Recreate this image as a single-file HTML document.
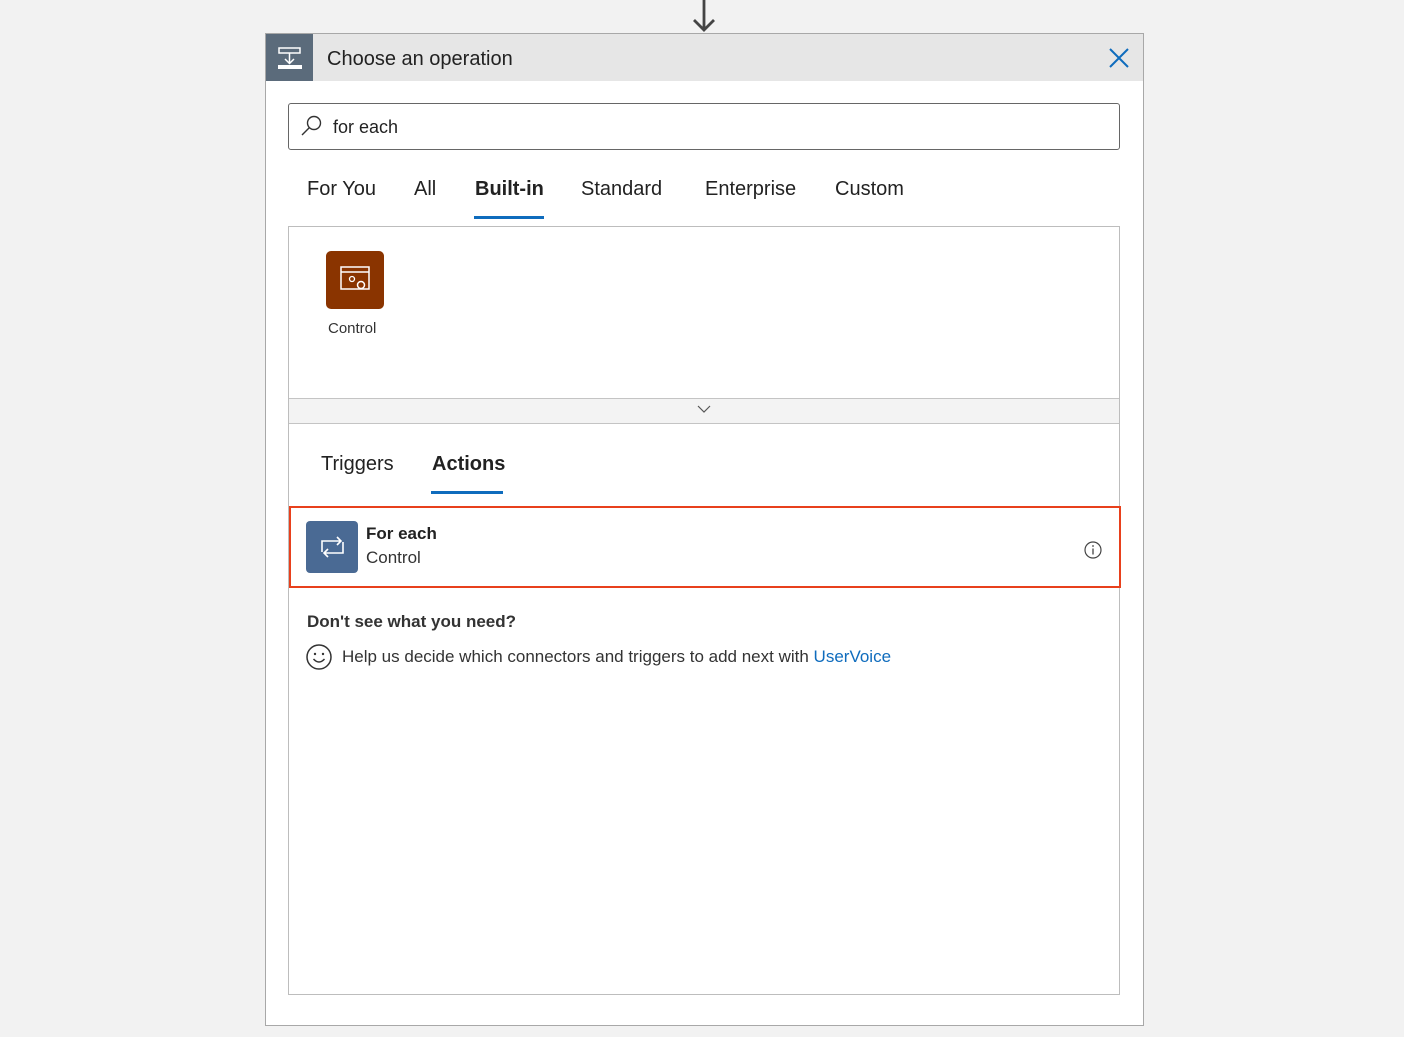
<!DOCTYPE html>
<html><head><style>
body{margin:0;width:1404px;height:1037px;background:#f2f2f2;font-family:"Liberation Sans",sans-serif;position:relative;overflow:hidden;color:#222}
.a{position:absolute}
</style></head><body>
<svg class="a" style="left:690px;top:0" width="28" height="34"><path d="M14 0V30M4 20L14 30L24 20" stroke="#444" stroke-width="2.8" fill="none"/></svg>
<div class="a" style="left:265px;top:33px;width:877px;height:991px;border:1px solid #a8a8a8;background:#fff"></div>
<div class="a" style="left:266px;top:34px;width:877px;height:47px;background:#e6e6e6"></div>
<div class="a" style="left:266px;top:34px;width:47px;height:47px;background:#5b6b7b"></div>
<svg class="a" style="left:276px;top:44px" width="28" height="28"><path d="M3 4H24V9H3ZM13.5 9V19M9 15L13.5 19.5L18 15" stroke="#fff" stroke-width="1.5" fill="none"/><rect x="2" y="21" width="24" height="4" fill="#fff"/></svg>
<div class="a" style="left:327px;top:48px;font-size:20px;color:#222">Choose an operation</div>
<svg class="a" style="left:1108px;top:47px" width="22" height="22"><path d="M2 2L20 20M20 2L2 20" stroke="#0f6cbd" stroke-width="2"/></svg>
<div class="a" style="left:288px;top:103px;width:830px;height:45px;border:1px solid #666;border-radius:3px"></div>
<svg class="a" style="left:300px;top:114px" width="24" height="24"><circle cx="14" cy="9" r="6.5" stroke="#333" stroke-width="1.4" fill="none"/><path d="M9.5 13.5L2 21" stroke="#333" stroke-width="1.4"/></svg>
<div class="a" style="left:333px;top:117px;font-size:18px">for each</div>
<div class="a" style="top:178px;font-size:20px;left:307px">For You</div>
<div class="a" style="top:178px;font-size:20px;left:414px">All</div>
<div class="a" style="top:178px;font-size:20px;left:475px;font-weight:bold">Built-in</div>
<div class="a" style="left:474px;top:216px;width:70px;height:3px;background:#0f6cbd"></div>
<div class="a" style="top:178px;font-size:20px;left:581px">Standard</div>
<div class="a" style="top:178px;font-size:20px;left:705px">Enterprise</div>
<div class="a" style="top:178px;font-size:20px;left:835px">Custom</div>
<div class="a" style="left:288px;top:226px;width:830px;height:767px;border:1px solid #bdbdbd"></div>
<div class="a" style="left:326px;top:251px;width:58px;height:58px;background:#8a3400;border-radius:5px"></div>
<svg class="a" style="left:326px;top:251px" width="58" height="58"><rect x="15" y="16" width="28" height="22" stroke="#fff" stroke-width="1.5" fill="none"/><path d="M15 21H43" stroke="#fff" stroke-width="1.5"/><circle cx="26" cy="28" r="2.5" stroke="#fff" stroke-width="1.3" fill="none"/><circle cx="35" cy="34" r="3.5" stroke="#fff" stroke-width="1.5" fill="#8a3400"/></svg>
<div class="a" style="left:328px;top:320px;font-size:15px;color:#333">Control</div>
<div class="a" style="left:289px;top:398px;width:830px;height:24px;background:#f3f3f3;border-top:1px solid #c4c4c4;border-bottom:1px solid #c4c4c4"></div>
<svg class="a" style="left:697px;top:404px" width="14" height="10"><path d="M1 2L7 8L13 2" stroke="#555" stroke-width="1.2" fill="none"/></svg>
<div class="a" style="top:453px;font-size:20px;left:321px">Triggers</div>
<div class="a" style="top:453px;font-size:20px;left:432px;font-weight:bold">Actions</div>
<div class="a" style="left:431px;top:491px;width:72px;height:3px;background:#0f6cbd"></div>
<div class="a" style="left:289px;top:506px;width:828px;height:78px;border:2px solid #e8401c"></div>
<div class="a" style="left:306px;top:521px;width:52px;height:52px;background:#4a6a94;border-radius:4px"></div>
<svg class="a" style="left:306px;top:521px" width="52" height="52"><path d="M16 31V20H35M31 16L35 20L31 24M37 21V32H18M22 28L18 32L22 36" stroke="#fff" stroke-width="1.6" fill="none"/></svg>
<div class="a" style="left:366px;top:524px;font-size:17px;font-weight:bold">For each</div>
<div class="a" style="left:366px;top:548px;font-size:17px;color:#333">Control</div>
<svg class="a" style="left:1083px;top:540px" width="20" height="20"><circle cx="10" cy="10" r="8" stroke="#444" stroke-width="1.2" fill="none"/><path d="M10 8.5V14.5" stroke="#444" stroke-width="1.3"/><circle cx="10" cy="6" r="0.9" fill="#444"/></svg>
<div class="a" style="left:307px;top:612px;font-size:17px;font-weight:bold;color:#333">Don't see what you need?</div>
<svg class="a" style="left:305px;top:643px" width="28" height="28"><circle cx="14" cy="14" r="12" stroke="#333" stroke-width="1.5" fill="none"/><circle cx="10" cy="11" r="1.2" fill="#333"/><circle cx="18" cy="11" r="1.2" fill="#333"/><path d="M8.5 16Q14 22 19.5 16" stroke="#333" stroke-width="1.5" fill="none"/></svg>
<div class="a" style="left:342px;top:647px;font-size:17px;color:#333">Help us decide which connectors and triggers to add next with <span style="color:#0f6cbd">UserVoice</span></div>
</body></html>
